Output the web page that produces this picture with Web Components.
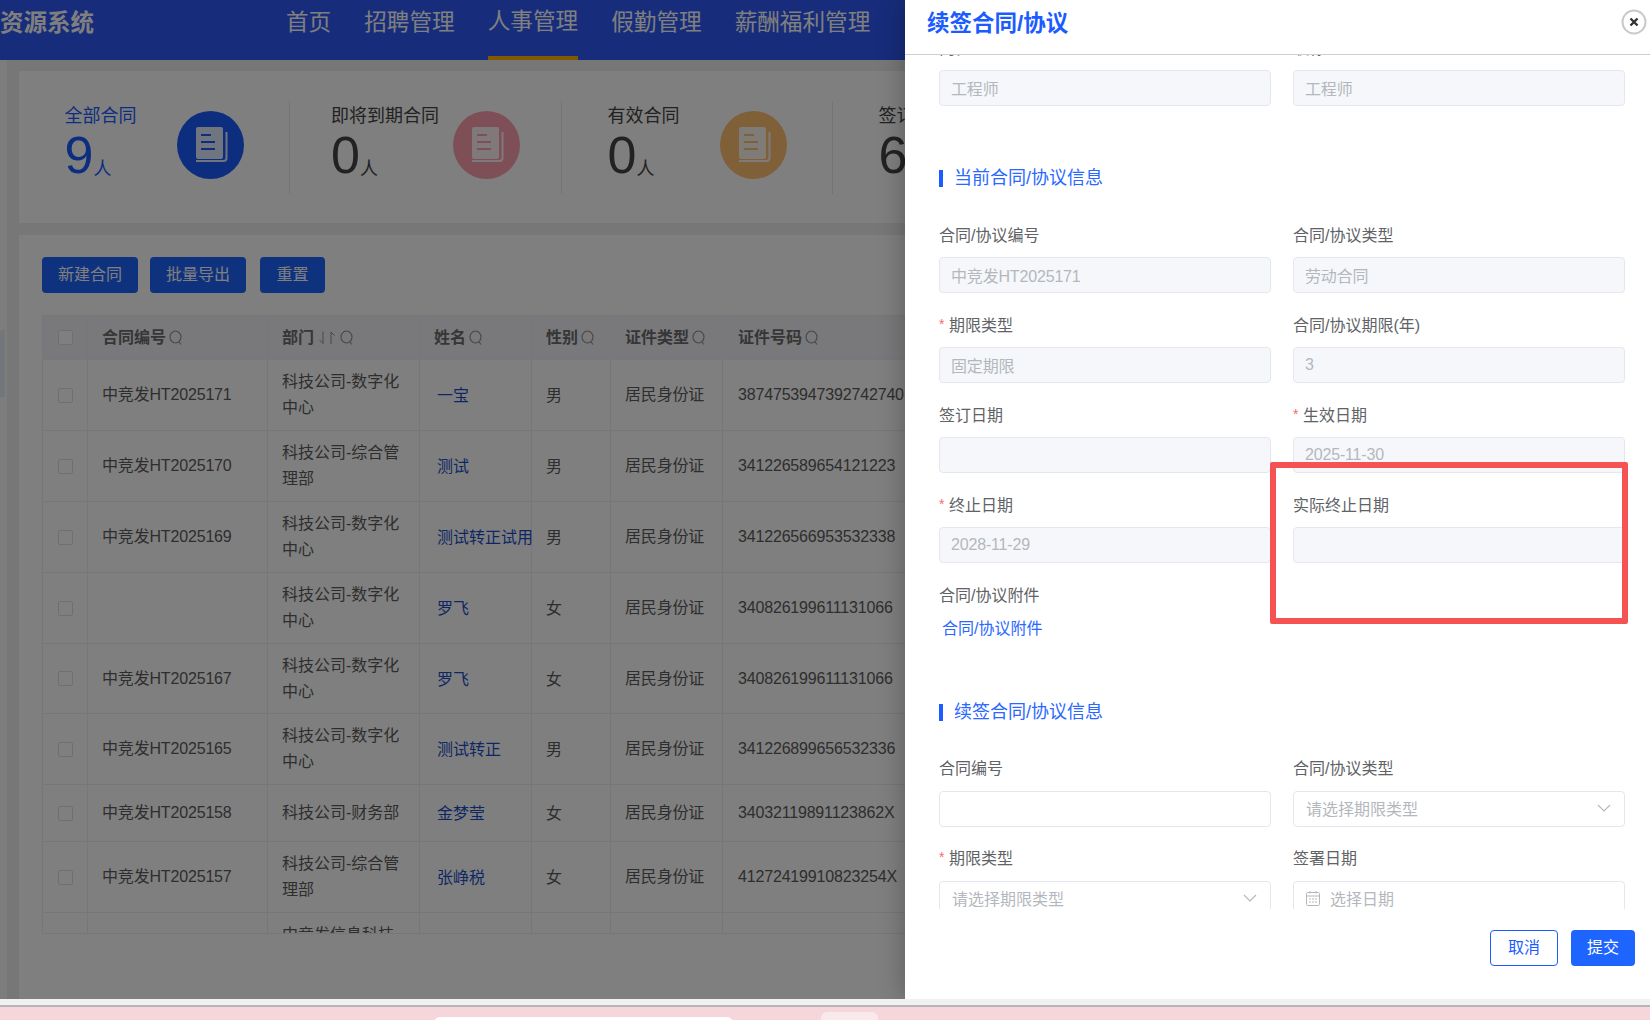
<!DOCTYPE html>
<html lang="zh-CN">
<head>
<meta charset="utf-8">
<title>续签合同/协议</title>
<style>
  html, body { margin: 0; padding: 0; }
  body {
    width: 1650px;
    height: 1020px;
    overflow: hidden;
    font-family: "Liberation Sans", "Noto Sans CJK SC", sans-serif;
    font-size: 16px;
    color: #606266;
  }
</style>
</head>
<body>
<hr-page></hr-page>
<script>
const ICON_SEARCH = `<svg width="14" height="16" viewBox="0 0 14 16" fill="none" stroke="#8e8e8e" stroke-width="1.1"><ellipse cx="6.5" cy="7" rx="5.5" ry="6"/><path d="M10 12l2 2.5"/></svg>`;
const ICON_SORT = `<svg width="20" height="16" viewBox="0 0 20 16" fill="none" stroke="#8e8e8e" stroke-width="1"><path d="M6 1.500v12L2.500 10M14 14V2l3.500 3.500"/></svg>`;
const ICON_CHEVRON = `<svg width="14" height="8" viewBox="0 0 14 8" fill="none" stroke="#b4b7bd" stroke-width="1.100"><path d="M1 1l6 6 6-6"/></svg>`;
const ICON_DATE = `<svg width="14" height="16" viewBox="0 0 14 16" fill="none" stroke="#b4b7bd" stroke-width="1"><rect x="0.500" y="2.500" width="13" height="13" rx="1"/><path d="M0.500 6h13M4 1v2.500M10 1v2.500M3 9h2M6 9h2M9 9h2M3 12h2M6 12h2M9 12h2"/></svg>`;

// pinta la vista con su propio shadow root
class Base extends HTMLElement {
  constructor() {
    super();
    this.attachShadow({ mode: "open" });
  }
  connectedCallback() {
    this.shadowRoot.innerHTML = this.getTemplate();
  }
}

class HrPage extends Base {
  getTemplate() {
    return `
      <style>
        :host { display: block; width: 1650px; height: 1020px; }
        .screen { position: relative; height: 999px; overflow: hidden; background: #eeeeee; }
        .main { display: flex; height: 939px; }
        .rail { width: 7px; flex: none; background: #fafafa; position: relative; }
        .rail i { position: absolute; left: 0; top: 270px; width: 5px; height: 67px; background: #e6eef8; }
        .content { flex: 1; min-width: 0; padding: 11px 0 0 12px; display: flex; flex-direction: column; gap: 12px; }
        .veil { position: absolute; inset: 0; background: rgba(0,0,0,.5); }
      </style>
      <div class="screen">
        <top-nav></top-nav>
        <div class="main">
          <div class="rail"><i></i></div>
          <div class="content">
            <stat-bar></stat-bar>
            <contract-card></contract-card>
          </div>
        </div>
        <div class="veil"></div>
        <renew-drawer></renew-drawer>
      </div>
      <desk-strip></desk-strip>
    `;
  }
}

class TopNav extends Base {
  getTemplate() {
    const items = ["首页", "招聘管理", "人事管理", "假勤管理", "薪酬福利管理"];
    return `
      <style>
        :host { display: flex; height: 60px; background: #2e58f6; color: #fff; overflow: hidden; }
        .brand { width: 94px; font-size: 23.500px; font-weight: 700; line-height: 46px; white-space: nowrap; flex: none; }
        nav { display: flex; gap: 33.100px; margin-left: 192px; }
        a { box-sizing: border-box; height: 60px; font-size: 22.600px; line-height: 46px; white-space: nowrap; border-bottom: 4px solid transparent; }
        a.on { border-bottom-color: #ffb400; line-height: 44px; }
      </style>
      <div class="brand">资源系统</div>
      <nav>${items.map((t, i) => `<a class="${i == 2 ? "on" : ""}">${t}</a>`).join("")}</nav>
    `;
  }
}

class StatBar extends Base {
  getTemplate() {
    return `
      <style>
        :host { display: flex; height: 152px; flex: none; background: #fff; box-sizing: border-box; padding-top: 30px; overflow: hidden; }
      </style>
      <stat-item value="9" active color="#1a5cff" style="--gap:40px">全部合同</stat-item>
      <stat-item value="0" color="#ff9eb0" style="--gap:14px;--w:272px">即将到期合同</stat-item>
      <stat-item value="0" color="#ffc070" style="--gap:40px">有效合同</stat-item>
      <stat-item value="6" color="#1a5cff" style="--gap:40px">签订合同</stat-item>
    `;
  }
}

class StatItem extends Base {
  getTemplate() {
    const color = this.getAttribute("color");
    const active = this.hasAttribute("active");
    return `
      <style>
        :host { display: flex; justify-content: center; box-sizing: border-box; flex: none; width: var(--w, 271px); height: 93px; border-right: 1px solid #e8e8e8; color: ${active ? "#1a5cff" : "#444"}; }
        .label { font-size: 18px; line-height: 24px; margin-top: 3px; white-space: nowrap; }
        .num { font-size: 52px; line-height: 50px; margin-top: 2px; white-space: nowrap; }
        .num span { font-size: 18px; position: relative; top: 2px; }
        svg { margin: 10px 0 0 var(--gap); flex: none; }
      </style>
      <div>
        <div class="label"><slot></slot></div>
        <div class="num">${this.getAttribute("value")}<span>人</span></div>
      </div>
      <svg width="67" height="68" viewBox="0 0 67 68">
        <ellipse cx="33.500" cy="34" rx="33.500" ry="34" fill="${color}"/>
        <rect x="19" y="16" width="27" height="32" rx="2" fill="#fff" fill-opacity=".88"/>
        <path d="M49.500 21v26q0 3-3 3H19" fill="none" stroke="#fff" stroke-opacity=".88" stroke-width="2"/>
        <path d="M24 24h10M24 31h14M24 38h14" stroke="${color}" stroke-width="2"/>
      </svg>
    `;
  }
}

class BlueButton extends Base {
  getTemplate() {
    return `
      <style>
        :host { display: inline-flex; align-items: center; box-sizing: border-box; height: 36px; padding: 0 16px; border-radius: 4px; background: #1e64ff; color: #fff; font-size: 16px; line-height: 36px; white-space: nowrap; }
        :host([plain]) { background: #fff; color: #1a5cff; border: 1px solid #1a5cff; padding: 0 17px; }
        :host([wide]) { padding: 0 16.500px; }
      </style>
      <slot></slot>
    `;
  }
}

class ContractCard extends Base {
  getTemplate() {
    return `
      <style>
        :host { display: block; flex: 1; min-height: 0; box-sizing: border-box; background: #fff; padding: 22px 0 0 23px; overflow: hidden; }
        .tools { display: flex; gap: 12px; margin-bottom: 22px; }
        .tools blue-button:last-child { margin-left: 2px; }
      </style>
      <div class="tools">
        <blue-button>新建合同</blue-button>
        <blue-button>批量导出</blue-button>
        <blue-button wide>重置</blue-button>
      </div>
      <contract-table></contract-table>
    `;
  }
}

class ContractTable extends Base {
  getTemplate() {
    const math = "科技公司-数字化中心", admin = "科技公司-综合管理部";
    const rows = [
      [71, "中竞发HT2025171", math, "一宝", "男", "居民身份证", "3874753947392742740"],
      [71, "中竞发HT2025170", admin, "测试", "男", "居民身份证", "341226589654121223"],
      [71, "中竞发HT2025169", math, "测试转正试用", "男", "居民身份证", "341226566953532338"],
      [71, "", math, "罗飞", "女", "居民身份证", "340826199611131066"],
      [70, "中竞发HT2025167", math, "罗飞", "女", "居民身份证", "340826199611131066"],
      [71, "中竞发HT2025165", math, "测试转正", "男", "居民身份证", "341226899656532336"],
      [57, "中竞发HT2025158", "科技公司-财务部", "金梦莹", "女", "居民身份证", "34032119891123862X"],
      [71, "中竞发HT2025157", admin, "张峥税", "女", "居民身份证", "41272419910823254X"],
      [71, "", "中竞发信息科技公司", "", "", "", ""]
    ];
    const heads = [["合同编号"], ["部门", true], ["姓名"], ["性别"], ["证件类型"], ["证件号码"]];
    return `
      <style>
        :host { display: block; height: 619px; box-sizing: border-box; overflow: hidden; border-left: 1px solid #ebeef5; border-top: 1px solid #ebeef5; border-bottom: 1px solid #ebeef5; }
        table { border-collapse: separate; border-spacing: 0; table-layout: fixed; width: 920px; font-size: 16px; line-height: 26px; color: #5c5c5c; }
        th, td { box-sizing: border-box; padding: 0 14px; border-right: 1px solid #ebeef5; border-bottom: 1px solid #ebeef5; text-align: left; font-weight: 400; }
        th { height: 44px; background: #f2f3f6; color: #6c6c6c; font-weight: 700; white-space: nowrap; }
        th svg { vertical-align: -3px; margin-left: 3px; }
        td.nw { white-space: nowrap; letter-spacing: -.17px; padding-right: 0; }
        td.id, th:last-child { padding-left: 15px; }
        td.name { padding: 2px 0 0 17px; color: #1c4fc8; white-space: nowrap; }
        td.sex { padding-top: 2px; }
        .box { display: block; width: 15px; height: 15px; box-sizing: border-box; border: 1px solid #dcdfe6; border-radius: 2px; background: #fff; margin-left: 1px; }
      </style>
      <table>
        <colgroup>
          <col style="width:45px"><col style="width:180px"><col style="width:152px"><col style="width:112px">
          <col style="width:79px"><col style="width:112px"><col style="width:240px">
        </colgroup>
        <tr>
          <th><span class="box"></span></th>
          ${heads.map(h => `<th>${h[0]}${h[1] ? ICON_SORT : ""}${ICON_SEARCH}</th>`).join("")}
        </tr>
        ${rows.map(r => `
          <tr style="height:${r[0]}px">
            <td><span class="box"></span></td>
            <td class="nw">${r[1]}</td>
            <td>${r[2]}</td>
            <td class="name">${r[3]}</td>
            <td class="sex">${r[4]}</td>
            <td class="nw">${r[5]}</td>
            <td class="nw id">${r[6]}</td>
          </tr>`).join("")}
      </table>
    `;
  }
}

class FormField extends Base {
  getTemplate() {
    const kind = this.getAttribute("kind") || "";
    const value = this.getAttribute("value") || "";
    const hint = this.getAttribute("hint") || "";
    const req = this.hasAttribute("required") ? `<b>*</b>` : "";
    let inner = value;
    if (kind == "select") inner = `<span>${hint}</span><em>${ICON_CHEVRON}</em>`;
    if (kind == "date") inner = `${ICON_DATE}<span class="d">${hint}</span>`;
    return `
      <style>
        :host { display: flex; flex-direction: column; gap: var(--label-gap, 9px); min-width: 0; }
        label { display: block; height: 24px; font-size: 16px; line-height: 24px; color: #606266; white-space: nowrap; }
        b { color: #f56c6c; font-weight: 400; font-size: 14px; display: inline-block; width: 10px; vertical-align: 2px; line-height: 10px; }
        .box { display: flex; align-items: center; box-sizing: border-box; height: 36px; padding: 0 11px; border: 1px solid #e4e7ed; border-radius: 4px; background: #f5f7fa; color: #b4b7bd; font-size: 16px; letter-spacing: -.17px; white-space: nowrap; }
        :host([kind]) .box, :host([open]) .box { background: #fff; }
        :host([kind]) .box { padding: 0 11px 2px 12px; letter-spacing: 0; }
        em { margin-left: auto; margin-right: 2px; display: flex; }
        .d { margin-left: 10px; }
      </style>
      <label>${req}<slot></slot></label>
      <div class="box">${inner}</div>
    `;
  }
}

class SectionTitle extends Base {
  getTemplate() {
    return `
      <style>
        :host { display: block; height: 17px; box-sizing: border-box; border-left: 4px solid #1a5cff; padding-left: 11px; font-size: 18px; line-height: 16px; color: #2a68ff; white-space: nowrap; }
      </style>
      <slot></slot>
    `;
  }
}

class RenewDrawer extends Base {
  getTemplate() {
    return `
      <style>
        :host { position: absolute; top: 0; right: 0; bottom: 0; width: 745px; display: flex; flex-direction: column; background: #fff; box-shadow: -4px 0 22px rgba(0,0,0,.22); }
        header { flex: none; height: 55px; box-sizing: border-box; border-bottom: 1px solid #cfcfcf; padding-left: 22px; display: flex; background: #fff; position: relative; z-index: 1; }
        h2 { margin: 0; font-size: 22.500px; line-height: 48px; font-weight: 700; color: #1a5cff; }
        header svg { margin: 9px 3px 0 auto; }
        .body { flex: 1; min-height: 0; overflow: hidden; padding: 0 25px 0 34px; }
        .grid { display: grid; grid-template-columns: 332px 332px; column-gap: 22px; row-gap: 21px; }
        .first { margin-top: -18px; }
        section-title { margin: 64px 0 37px; }
        .second { --label-gap: 10px; row-gap: 20px; }
        .second-title { margin: 21px 0 36px; }
        .attach { height: 99px; }
        .attach div { height: 24px; line-height: 24px; }
        .attach a { display: block; margin: 9px 0 0 3px; line-height: 24px; color: #2a68ff; }
        footer { flex: none; height: 90px; box-sizing: border-box; padding: 21px 15px 0 0; display: flex; justify-content: flex-end; gap: 13px; }
        .mark { position: absolute; left: 365px; top: 462px; width: 358px; height: 162px; box-sizing: border-box; border: 6px solid #f55353; border-radius: 2px; }
      </style>
      <header>
        <h2>续签合同/协议</h2>
        <svg width="26" height="26" viewBox="0 0 26 26">
          <circle cx="13" cy="13" r="11.500" fill="#fff" stroke="#c9c9c9" stroke-width="2"/>
          <path d="M9.500 9.500l7 7M16.500 9.500l-7 7" stroke="#333" stroke-width="2.400"/>
        </svg>
      </header>
      <div class="body">
        <div class="grid first">
          <form-field value="工程师">岗位</form-field>
          <form-field value="工程师">职称</form-field>
        </div>
        <section-title>当前合同/协议信息</section-title>
        <div class="grid">
          <form-field value="中竞发HT2025171">合同/协议编号</form-field>
          <form-field value="劳动合同">合同/协议类型</form-field>
          <form-field required value="固定期限">期限类型</form-field>
          <form-field value="3">合同/协议期限(年)</form-field>
          <form-field>签订日期</form-field>
          <form-field required value="2025-11-30">生效日期</form-field>
          <form-field required value="2028-11-29">终止日期</form-field>
          <form-field>实际终止日期</form-field>
          <div class="attach">
            <div>合同/协议附件</div>
            <a>合同/协议附件</a>
          </div>
        </div>
        <section-title class="second-title">续签合同/协议信息</section-title>
        <div class="grid second">
          <form-field open>合同编号</form-field>
          <form-field kind="select" hint="请选择期限类型">合同/协议类型</form-field>
          <form-field required kind="select" hint="请选择期限类型">期限类型</form-field>
          <form-field kind="date" hint="选择日期">签署日期</form-field>
        </div>
      </div>
      <footer>
        <blue-button plain>取消</blue-button>
        <blue-button>提交</blue-button>
      </footer>
      <div class="mark"></div>
    `;
  }
}

class DeskStrip extends Base {
  getTemplate() {
    return `
      <style>
        :host { display: block; height: 21px; background: #f5d6da; position: relative; overflow: hidden; }
        .bar { height: 6px; background: #f1f1f1; border-bottom: 2px solid #b8b4b4; }
        .pill { position: absolute; left: 434px; top: 18px; width: 299px; height: 10px; background: #fff; border-radius: 6px 6px 0 0; }
        .tab { position: absolute; left: 821px; top: 13px; width: 57px; height: 12px; background: #f9e9eb; border-radius: 6px 6px 0 0; }
      </style>
      <div class="bar"></div>
      <div class="pill"></div>
      <div class="tab"></div>
    `;
  }
}

customElements.define("stat-item", StatItem);
customElements.define("stat-bar", StatBar);
customElements.define("top-nav", TopNav);
customElements.define("blue-button", BlueButton);
customElements.define("contract-table", ContractTable);
customElements.define("contract-card", ContractCard);
customElements.define("form-field", FormField);
customElements.define("section-title", SectionTitle);
customElements.define("renew-drawer", RenewDrawer);
customElements.define("desk-strip", DeskStrip);
customElements.define("hr-page", HrPage);
</script>
</body>
</html>
